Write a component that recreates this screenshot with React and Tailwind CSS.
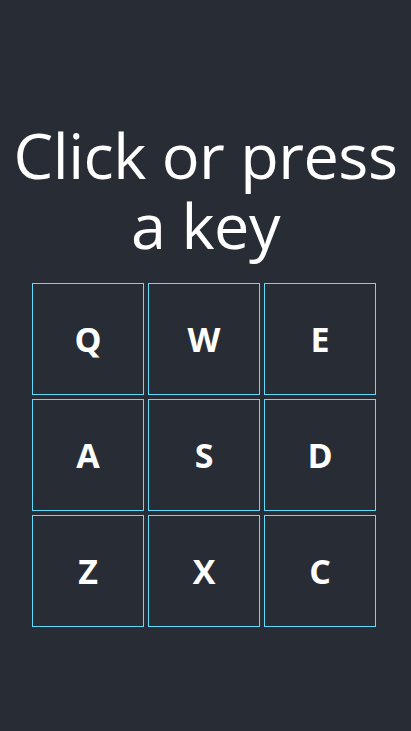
const keys = ["Q", "W", "E", "A", "S", "D", "Z", "X", "C"];

const App = () => {
  return (
    <div className="min-h-screen bg-[#282c34] flex flex-col items-center pt-[120px] font-['Open_Sans',sans-serif] text-white">
      <h1 className="text-[63px] leading-[70px] text-center tracking-[-0.5px]">
        Click or press
        <br />a key
      </h1>
      <div className="mt-[23px] ml-[-3px] grid grid-cols-3 gap-1">
        {keys.map((k) => (
          <div
            key={k}
            className="w-[112px] h-[112px] border border-[#61dafb] flex items-center justify-center text-[34px] font-bold"
          >
            {k}
          </div>
        ))}
      </div>
    </div>
  );
};

export default App;
